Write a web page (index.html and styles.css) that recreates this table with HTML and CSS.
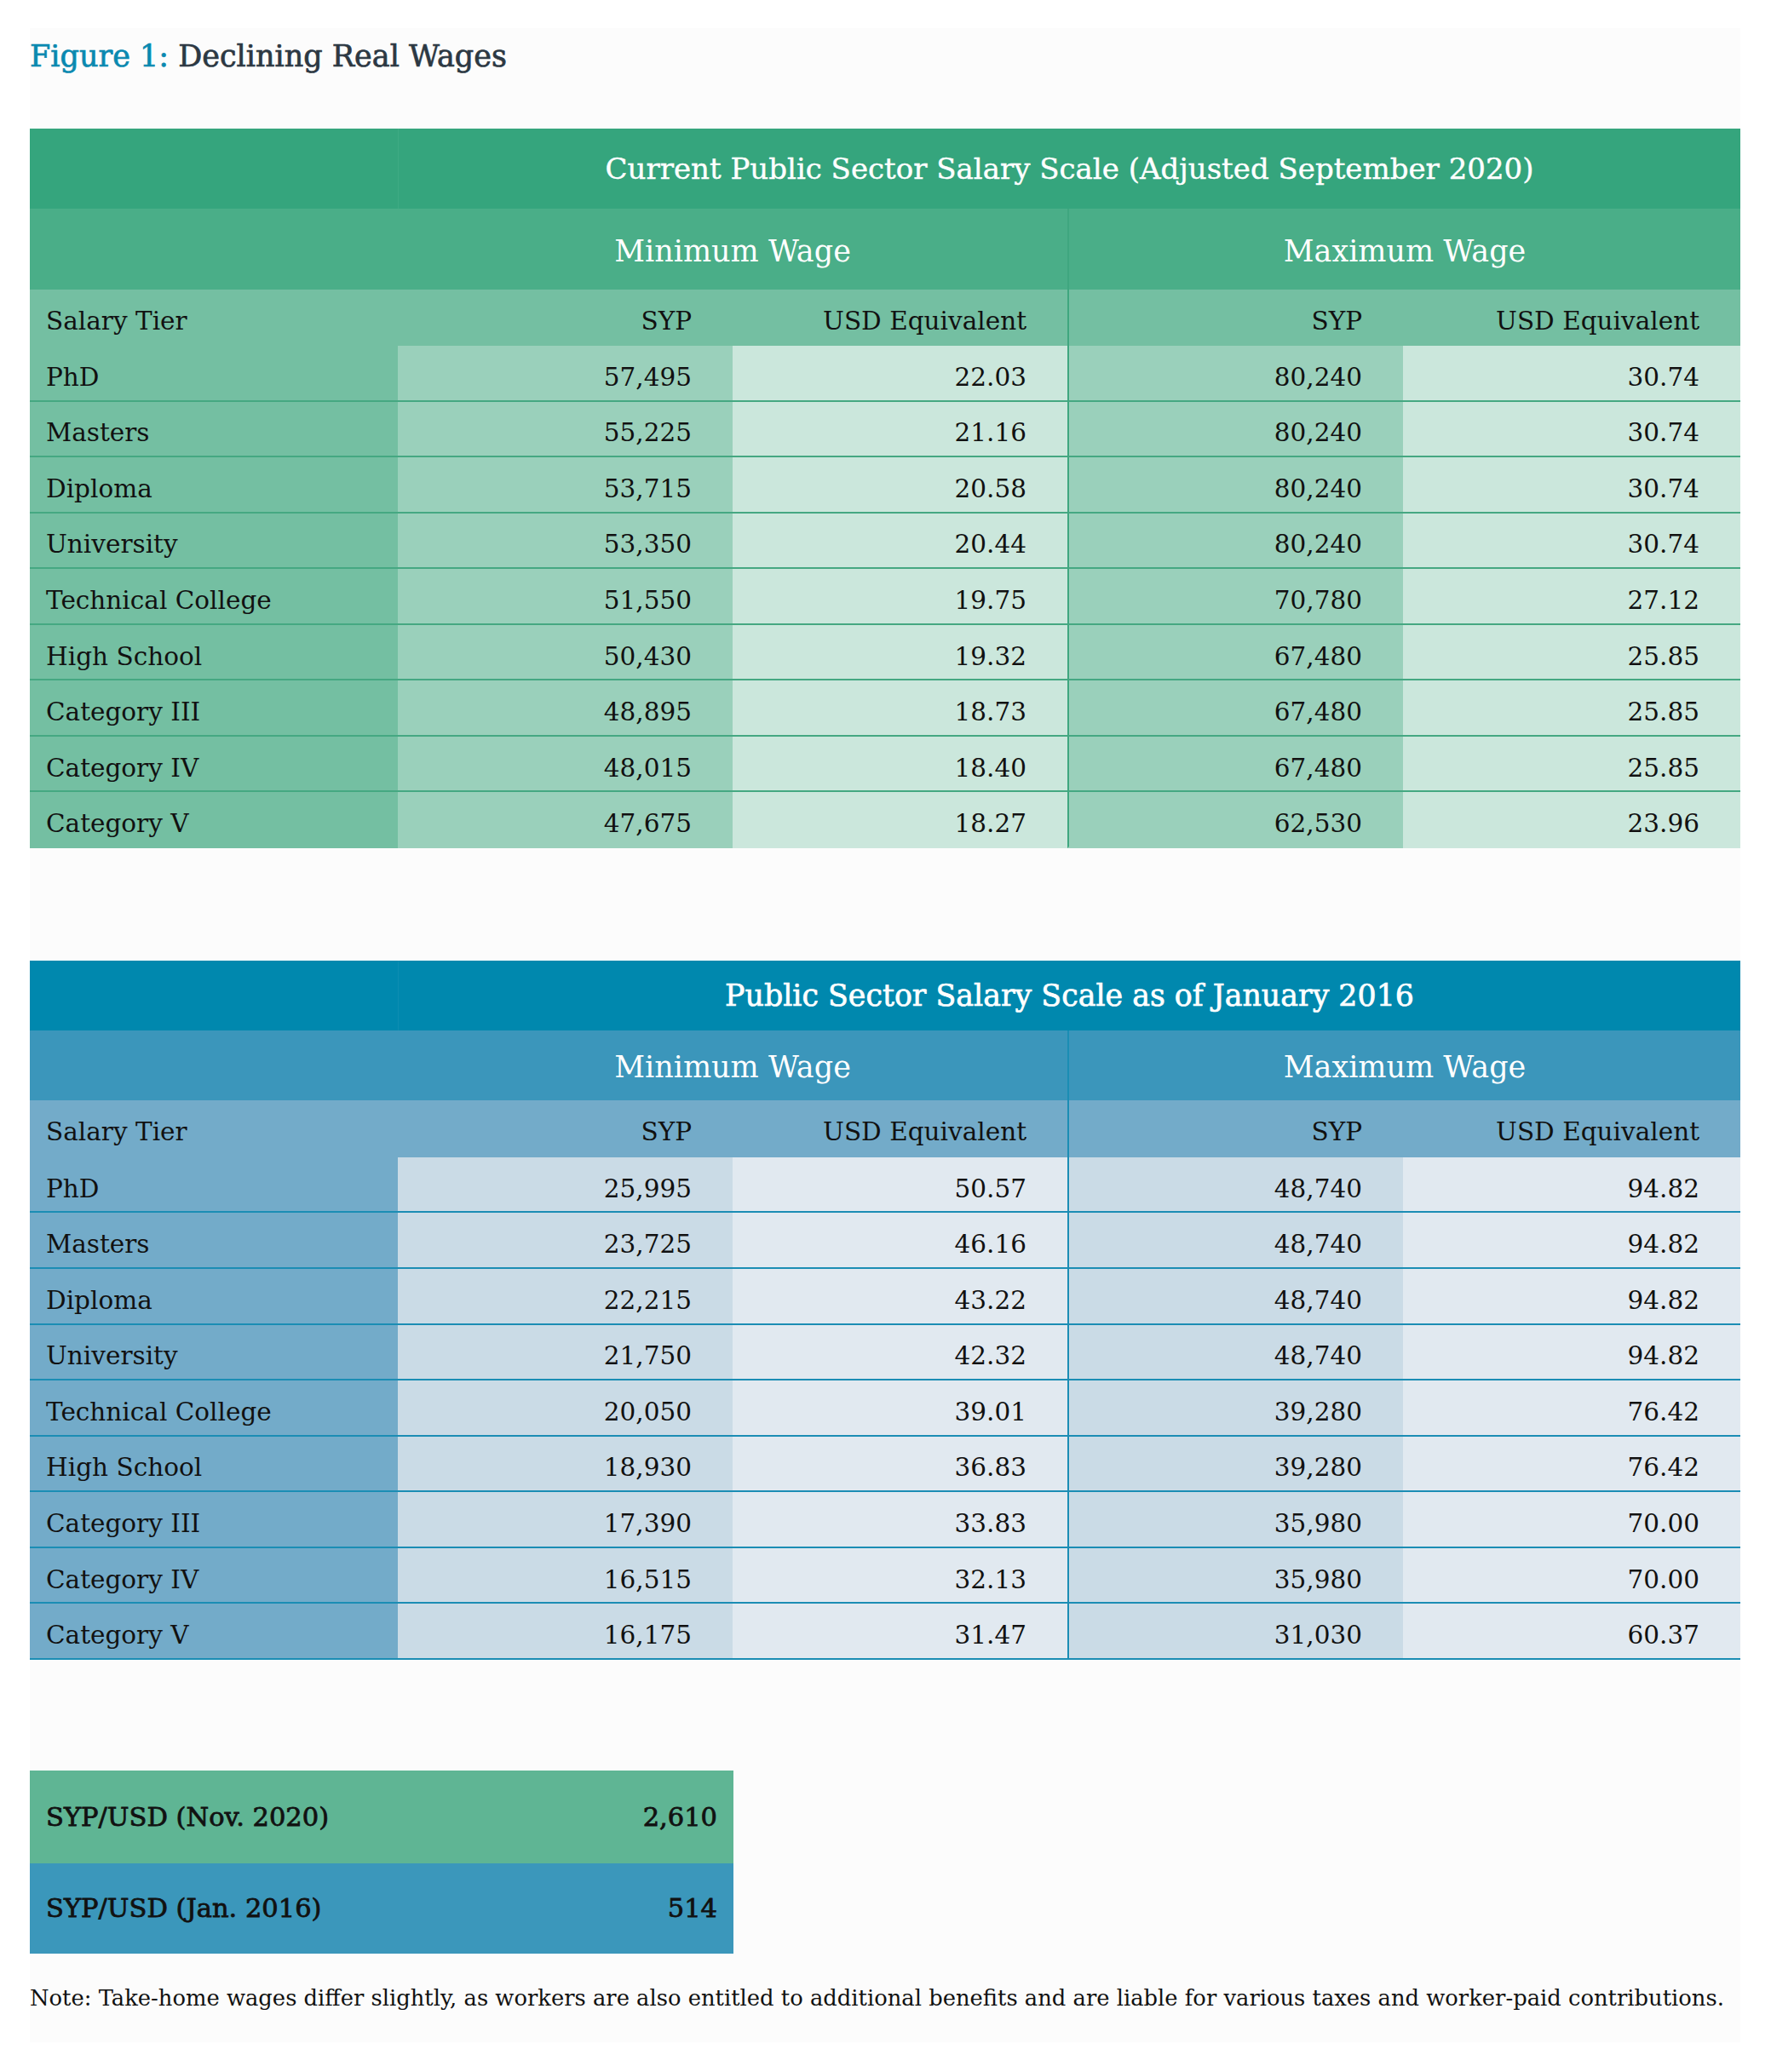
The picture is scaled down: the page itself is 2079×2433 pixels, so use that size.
FILE: index.html
```html
<!DOCTYPE html>
<html lang="en">
<head>
<meta charset="utf-8">
<title>Figure 1: Declining Real Wages</title>
<link rel="stylesheet" href="styles.css">
</head>
<body>
<div class="panel">
  <h1 class="fig-title"><span class="fig-num">Figure 1:</span> Declining Real Wages</h1>

  <div class="wage-table green tall">
    <div class="cell title-blank"></div>
    <div class="cell title">Current Public Sector Salary Scale (Adjusted September 2020)</div>
    <div class="cell sub-blank"></div>
    <div class="cell sub">Minimum Wage</div>
    <div class="cell sub edge">Maximum Wage</div>
    <div class="cell head tier">Salary Tier</div>
    <div class="cell head num">SYP</div>
    <div class="cell head num">USD Equivalent</div>
    <div class="cell head num edge">SYP</div>
    <div class="cell head num">USD Equivalent</div>

    <div class="cell tier row">PhD</div><div class="cell syp row">57,495</div><div class="cell usd row">22.03</div><div class="cell syp row edge">80,240</div><div class="cell usd row">30.74</div>
    <div class="cell tier row">Masters</div><div class="cell syp row">55,225</div><div class="cell usd row">21.16</div><div class="cell syp row edge">80,240</div><div class="cell usd row">30.74</div>
    <div class="cell tier row">Diploma</div><div class="cell syp row">53,715</div><div class="cell usd row">20.58</div><div class="cell syp row edge">80,240</div><div class="cell usd row">30.74</div>
    <div class="cell tier row">University</div><div class="cell syp row">53,350</div><div class="cell usd row">20.44</div><div class="cell syp row edge">80,240</div><div class="cell usd row">30.74</div>
    <div class="cell tier row">Technical College</div><div class="cell syp row">51,550</div><div class="cell usd row">19.75</div><div class="cell syp row edge">70,780</div><div class="cell usd row">27.12</div>
    <div class="cell tier row">High School</div><div class="cell syp row">50,430</div><div class="cell usd row">19.32</div><div class="cell syp row edge">67,480</div><div class="cell usd row">25.85</div>
    <div class="cell tier row">Category III</div><div class="cell syp row">48,895</div><div class="cell usd row">18.73</div><div class="cell syp row edge">67,480</div><div class="cell usd row">25.85</div>
    <div class="cell tier row">Category IV</div><div class="cell syp row">48,015</div><div class="cell usd row">18.40</div><div class="cell syp row edge">67,480</div><div class="cell usd row">25.85</div>
    <div class="cell tier row last">Category V</div><div class="cell syp row last">47,675</div><div class="cell usd row last">18.27</div><div class="cell syp row edge last">62,530</div><div class="cell usd row last">23.96</div>
  </div>

  <div class="wage-table blue short">
    <div class="cell title-blank"></div>
    <div class="cell title">Public Sector Salary Scale as of January 2016</div>
    <div class="cell sub-blank"></div>
    <div class="cell sub">Minimum Wage</div>
    <div class="cell sub edge">Maximum Wage</div>
    <div class="cell head tier">Salary Tier</div>
    <div class="cell head num">SYP</div>
    <div class="cell head num">USD Equivalent</div>
    <div class="cell head num edge">SYP</div>
    <div class="cell head num">USD Equivalent</div>

    <div class="cell tier row">PhD</div><div class="cell syp row">25,995</div><div class="cell usd row">50.57</div><div class="cell syp row edge">48,740</div><div class="cell usd row">94.82</div>
    <div class="cell tier row">Masters</div><div class="cell syp row">23,725</div><div class="cell usd row">46.16</div><div class="cell syp row edge">48,740</div><div class="cell usd row">94.82</div>
    <div class="cell tier row">Diploma</div><div class="cell syp row">22,215</div><div class="cell usd row">43.22</div><div class="cell syp row edge">48,740</div><div class="cell usd row">94.82</div>
    <div class="cell tier row">University</div><div class="cell syp row">21,750</div><div class="cell usd row">42.32</div><div class="cell syp row edge">48,740</div><div class="cell usd row">94.82</div>
    <div class="cell tier row">Technical College</div><div class="cell syp row">20,050</div><div class="cell usd row">39.01</div><div class="cell syp row edge">39,280</div><div class="cell usd row">76.42</div>
    <div class="cell tier row">High School</div><div class="cell syp row">18,930</div><div class="cell usd row">36.83</div><div class="cell syp row edge">39,280</div><div class="cell usd row">76.42</div>
    <div class="cell tier row">Category III</div><div class="cell syp row">17,390</div><div class="cell usd row">33.83</div><div class="cell syp row edge">35,980</div><div class="cell usd row">70.00</div>
    <div class="cell tier row">Category IV</div><div class="cell syp row">16,515</div><div class="cell usd row">32.13</div><div class="cell syp row edge">35,980</div><div class="cell usd row">70.00</div>
    <div class="cell tier row">Category V</div><div class="cell syp row">16,175</div><div class="cell usd row">31.47</div><div class="cell syp row edge">31,030</div><div class="cell usd row">60.37</div>
  </div>

  <div class="rates">
    <div class="rate rate-green"><span>SYP/USD (Nov. 2020)</span><span>2,610</span></div>
    <div class="rate rate-blue"><span>SYP/USD (Jan. 2016)</span><span>514</span></div>
  </div>

  <p class="note">Note: Take-home wages differ slightly, as workers are also entitled to additional benefits and are liable for various taxes and worker-paid contributions.</p>
</div>
</body>
</html>
```

FILE: styles.css
```css
html, body {
  margin: 0;
  padding: 0;
  background: #ffffff;
}

body {
  padding: 33px 0 0 35px;
  font-family: "DejaVu Serif", "Liberation Serif", serif;
  color: #111;
}

.panel {
  width: 2008px;
  height: 2365px;
  box-sizing: border-box;
  background: #fcfcfc;
  padding-top: 12px;
}

.fig-title {
  margin: 0;
  font-size: 35px;
  line-height: 42px;
  font-weight: normal;
  color: #2c3843;
  -webkit-text-stroke: 0.7px currentColor;
}

.fig-num {
  color: #0a89b0;
}

.wage-table {
  display: grid;
  grid-template-columns: 432px 393px 393px 394px 396px;
  margin-top: 64px;
  font-size: 29.5px;
}

.wage-table.tall {
  grid-template-rows: 94px 95px 66px repeat(9, 65.55px);
}

.wage-table.short {
  margin-top: 132px;
  grid-template-rows: 82px 82px 67px repeat(9, 65.55px);
}

.cell {
  box-sizing: border-box;
  display: flex;
  align-items: center;
  white-space: nowrap;
}

.title {
  grid-column: 2 / 6;
  justify-content: center;
  color: #fff;
  font-size: 34px;
  -webkit-text-stroke: 0.4px currentColor;
}

.blue .title {
  font-size: 34.8px;
  -webkit-text-stroke: 0.7px currentColor;
}

.sub {
  grid-column: span 2;
  justify-content: center;
  color: #fff;
  font-size: 35px;
  padding-top: 4px;
}

.head {
  padding-top: 8px;
}

.tier {
  padding-left: 19px;
}

.num, .syp, .usd {
  justify-content: flex-end;
  padding-right: 48px;
}

.row {
  border-bottom: 2px solid transparent;
  padding-top: 10px;
}

.edge {
  border-left: 2px solid transparent;
}

/* green palette */
.green .title-blank, .green .title { background: #35a57d; }
.green .title { border-left: 1px solid #3eab84; }
.green .sub-blank, .green .sub { background: #4aae88; }
.green .head, .green .tier { background: #74bfa2; }
.green .syp { background: #9ad0bb; }
.green .usd { background: #cbe7dc; }
.green .row { border-bottom-color: #45a882; }
.green .row.last { border-bottom-color: transparent; }
.green .edge { border-left-color: #3fa67f; }

/* blue palette */
.blue .title-blank, .blue .title { background: #0088ae; }
.blue .title { border-left: 1px solid #0e8db2; }
.blue .sub-blank, .blue .sub { background: #3b96bb; }
.blue .head, .blue .tier { background: #73abc9; }
.blue .syp { background: #cadbe6; }
.blue .usd { background: #e1e9f0; }
.blue .row { border-bottom-color: #1b8db4; }
.blue .edge { border-left-color: #1b8db4; }

.rates {
  width: 826px;
  margin-top: 130px;
  font-size: 30.5px;
  -webkit-text-stroke: 0.8px currentColor;
}

.rate {
  display: flex;
  justify-content: space-between;
  align-items: center;
  padding: 0 19px;
}

.rate-green {
  height: 109px;
  background: #5fb594;
}

.rate-blue {
  height: 106px;
  background: #3b97bb;
}

.note {
  margin: 36px 0 0;
  font-size: 25.8px;
  line-height: 32px;
  white-space: nowrap;
}
```
